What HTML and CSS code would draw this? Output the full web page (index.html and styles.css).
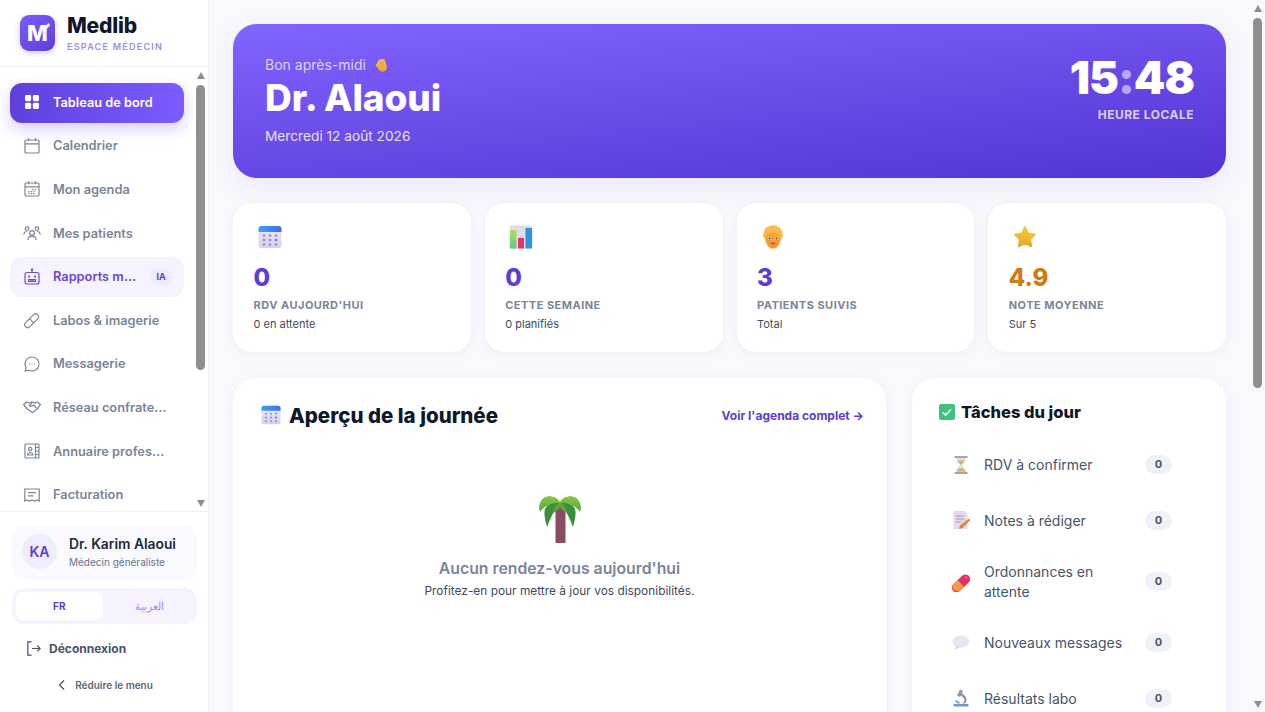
FILE: index.html
```html
<!DOCTYPE html>
<html lang="fr">
<head>
  <meta charset="UTF-8">
  <meta name="viewport" content="width=device-width, initial-scale=1.0">
  <title>Medlib - Tableau de bord</title>
  <link rel="stylesheet" href="styles.css">
</head>
<body>
  <svg class="defs" width="0" height="0" aria-hidden="true">
    <defs>
      <linearGradient id="cal-top" x1="0" y1="0" x2="1" y2="0"><stop offset="0" stop-color="#3aa0f5"/><stop offset="1" stop-color="#3a6ff0"/></linearGradient>
      <linearGradient id="cal-body" x1="0" y1="0" x2="0" y2="1"><stop offset="0" stop-color="#efeaf7"/><stop offset="1" stop-color="#d9cdf0"/></linearGradient>
      <linearGradient id="face" x1="0" y1="0" x2="0" y2="1"><stop offset="0" stop-color="#f9a83a"/><stop offset="1" stop-color="#f08a38"/></linearGradient>
      <linearGradient id="leaf" x1="0" y1="0" x2="0" y2="1"><stop offset="0" stop-color="#84c944"/><stop offset="1" stop-color="#55a83c"/></linearGradient>
      <linearGradient id="star" x1="0" y1="0" x2="0" y2="1"><stop offset="0" stop-color="#f6cb33"/><stop offset="1" stop-color="#e6a92c"/></linearGradient>
      <linearGradient id="bar-green" x1="0" y1="0" x2="0" y2="1"><stop offset="0" stop-color="#b4dc5c"/><stop offset="1" stop-color="#5cc98f"/></linearGradient>
      <linearGradient id="clap" x1="0" y1="0" x2="0" y2="1"><stop offset="0" stop-color="#f9c74f"/><stop offset="1" stop-color="#ee9d34"/></linearGradient>
      <symbol id="emoji-cal" viewBox="0 0 24 24">
        <rect x="0.5" y="1" width="23" height="22" rx="3" fill="url(#cal-body)"/>
        <path d="M0.5 7V4a3 3 0 0 1 3-3h17a3 3 0 0 1 3 3v3z" fill="url(#cal-top)"/>
        <g fill="#9a8cc8">
          <circle cx="6" cy="10.5" r="1.3"/><circle cx="12" cy="10.5" r="1.3"/><circle cx="18" cy="10.5" r="1.3"/>
          <circle cx="6" cy="15" r="1.3"/><circle cx="12" cy="15" r="1.3"/><circle cx="18" cy="15" r="1.3" fill="#4f7fd8"/>
          <circle cx="6" cy="19.5" r="1.3"/><circle cx="12" cy="19.5" r="1.3"/><circle cx="18" cy="19.5" r="1.3"/>
        </g>
      </symbol>
    </defs>
  </svg>

  <aside class="sidebar">
    <div class="sidebar-head">
      <div class="logo-icon">M<span class="logo-spark"></span></div>
      <div>
        <div class="logo-name">Medlib</div>
        <div class="logo-sub">ESPACE MÉDECIN</div>
      </div>
    </div>

    <div class="nav-wrap">
      <nav class="nav">
        <a class="nav-item active">
          <svg class="nav-icon" viewBox="0 0 18 18"><rect x="2" y="2" width="6.2" height="6.2" rx="1.4"/><rect x="9.8" y="2" width="6.2" height="6.2" rx="1.4"/><rect x="2" y="9.8" width="6.2" height="6.2" rx="1.4"/><rect x="9.8" y="9.8" width="6.2" height="6.2" rx="1.4"/></svg>
          <span class="nav-text">Tableau de bord</span>
        </a>
        <a class="nav-item">
          <svg class="nav-icon" viewBox="0 0 18 18"><rect x="2" y="3" width="14" height="13" rx="1"/><path d="M2 6.8h14M5.500 1.200v3M12.500 1.200v3"/></svg>
          <span class="nav-text">Calendrier</span>
        </a>
        <a class="nav-item">
          <svg class="nav-icon" viewBox="0 0 18 18"><rect x="2" y="3" width="14" height="13" rx="1"/><path d="M2 6.800h14M5.500 1.200v3M12.500 1.200v3"/><path d="M9 9.600h3.800M5.200 11.600h7.600M5.200 13.600h7.600" stroke-dasharray="1.300 1.200"/></svg>
          <span class="nav-text">Mon agenda</span>
        </a>
        <a class="nav-item">
          <svg class="nav-icon" viewBox="0 0 18 18"><circle cx="9" cy="9" r="2.300"/><path d="M4.800 16c.3-2.500 2-3.800 4.200-3.800s3.900 1.300 4.200 3.800"/><circle cx="4" cy="4.600" r="1.800"/><circle cx="14" cy="4.600" r="1.800"/><path d="M.8 10.500c.2-2 1.300-3 2.900-3M17.200 10.500c-.2-2-1.300-3-2.900-3"/></svg>
          <span class="nav-text">Mes patients</span>
        </a>
        <a class="nav-item soft">
          <svg class="nav-icon" viewBox="0 0 18 18"><rect x="2" y="4.500" width="14" height="11.500" rx="2"/><path d="M9 4.500V1.800"/><circle cx="9" cy="1.600" r=".6"/><circle cx="6" cy="8.600" r=".5"/><circle cx="12" cy="8.600" r=".5"/><path d="M5.500 11.500h7v1.800h-7zM8 11.500v1.800M10 11.500v1.800"/></svg>
          <span class="nav-text">Rapports médicaux</span>
          <span class="nav-badge">IA</span>
        </a>
        <a class="nav-item">
          <svg class="nav-icon" viewBox="0 0 18 18"><path d="M2.600 11.700l8-8a2.900 2.900 0 0 1 4.100 4.100l-8 8a2.900 2.900 0 0 1-4.100-4.100zM6.600 7.700l4.100 4.100"/></svg>
          <span class="nav-text">Labos &amp; imagerie</span>
        </a>
        <a class="nav-item">
          <svg class="nav-icon" viewBox="0 0 18 18"><path d="M9 2a7 7 0 1 1-3 13.300L2.200 16l.8-3.500A7 7 0 0 1 9 2z"/><path d="M5.800 9h6.400" stroke-dasharray="1 1.700"/></svg>
          <span class="nav-text">Messagerie</span>
        </a>
        <a class="nav-item">
          <svg class="nav-icon" viewBox="0 0 18 18"><path d="M.6 6.500L3.500 4l2.700 1 2.800-1 2.800 1 2.700-1 2.900 2.500-2.800 4.200-4.300 3.300a1.200 1.200 0 0 1-1.600 0L4 10.700z"/><path d="M9 5.200L6.300 7.600c.8 1 2 1 3 .2l1.200-.8 3.500 3.600"/></svg>
          <span class="nav-text">Réseau confraternel</span>
        </a>
        <a class="nav-item">
          <svg class="nav-icon" viewBox="0 0 18 18"><rect x="2" y="2" width="14" height="14" rx="1"/><path d="M12.500 2v14M12.500 5.500H16M12.500 9H16M12.500 12.500H16"/><circle cx="7.200" cy="7" r="1.700"/><path d="M4.500 13c.2-1.700 1.200-2.500 2.700-2.500s2.500.8 2.700 2.500z"/></svg>
          <span class="nav-text">Annuaire professionnel</span>
        </a>
        <a class="nav-item">
          <svg class="nav-icon" viewBox="0 0 18 18"><path d="M1.800 3h14.400v12l-2-1-2.600 1-2.600-1-2.600 1-2.600-1-2 1z"/><path d="M5 6.700h8M5 9.800h5.500"/></svg>
          <span class="nav-text">Facturation</span>
        </a>
      </nav>
      <div class="scrollbar scrollbar-nav">
        <span class="arrow-up"></span>
        <span class="thumb"></span>
        <span class="arrow-down"></span>
      </div>
    </div>

    <div class="sidebar-foot">
      <div class="user-card">
        <div class="avatar">KA</div>
        <div>
          <div class="user-name">Dr. Karim Alaoui</div>
          <div class="user-role">Médecin généraliste</div>
        </div>
      </div>
      <div class="lang-switch">
        <span class="lang-btn selected">FR</span>
        <span class="lang-btn" lang="ar" dir="rtl">العربية</span>
      </div>
      <a class="logout">
        <svg viewBox="0 0 18 18" width="17" height="17"><path d="M7 2H3v14h4M7.500 9h8.500M13 6l3 3-3 3"/></svg>
        Déconnexion
      </a>
      <a class="collapse">
        <svg viewBox="0 0 12 12" width="12" height="12"><path d="M8 1.500L3.500 6 8 10.500"/></svg>
        Réduire le menu
      </a>
    </div>
  </aside>

  <main class="content">
    <section class="hero">
      <div>
        <p class="hero-hello">Bon après-midi
          <svg class="hero-clap" viewBox="0 0 14 14" width="14" height="14"><path d="M3 5l2-3.500 1.300.6L7.500.8l1.400.6 1.500-.2 1.400 3.600 1 3.700c.5 2.500-1 4.700-3.300 5.100-2 .3-3.600-.4-4.700-2L1.800 7.500c-.5-.9.600-1.600 1.200-.9z" fill="url(#clap)"/><path d="M5.500 3.500l2.800 4.200M7.800 2.500l2.200 4.300" stroke="#d98c22" stroke-width=".8" fill="none"/></svg>
        </p>
        <h1 class="hero-name">Dr. Alaoui</h1>
        <p class="hero-date">Mercredi 12 août 2026</p>
      </div>
      <div class="hero-clock">
        <div class="hero-time">15<span class="hero-colon">:</span>48</div>
        <div class="hero-label">HEURE LOCALE</div>
      </div>
    </section>

    <section class="stats">
      <div class="stat-card">
        <svg class="stat-icon" viewBox="0 0 24 24"><use href="#emoji-cal"/></svg>
        <div class="stat-value">0</div>
        <div class="stat-label">RDV AUJOURD'HUI</div>
        <div class="stat-sub">0 en attente</div>
      </div>
      <div class="stat-card">
        <svg class="stat-icon" viewBox="0 0 24 24">
          <rect x="0.500" y="0.500" width="23" height="23" rx="1.500" fill="#dfdde6"/>
          <rect x="1" y="5" width="6.500" height="18.500" fill="url(#bar-green)"/>
          <rect x="9" y="13" width="6" height="10.500" fill="#e8326b"/>
          <rect x="16.500" y="3" width="6.500" height="20.500" fill="#2e93dc"/>
        </svg>
        <div class="stat-value">0</div>
        <div class="stat-label">CETTE SEMAINE</div>
        <div class="stat-sub">0 planifiés</div>
      </div>
      <div class="stat-card">
        <svg class="stat-icon" viewBox="0 0 24 24">
          <path d="M12 .3c2 0 3.500.5 5 1.500 2.500.8 4 3 4.200 5.700.9 1.500.9 3 .3 4.500-.4 1-.9 1.800-1.500 2.500C19 20.500 15.800 23.800 12 23.800S5 20.500 4 14.500c-.6-.7-1.100-1.500-1.500-2.500-.6-1.500-.6-3 .3-4.500C3 4.800 4.500 2.600 7 1.800 8.500.8 10 .3 12 .3z" fill="#f9bb4c"/>
          <path d="M4.800 11.500c1.500-2.500 3.500-4 7.200-4s5.700 1.500 7.200 4c.3 6-3 11.500-7.200 11.500S4.500 17.500 4.800 11.500z" fill="url(#face)"/>
          <circle cx="8.600" cy="13.500" r="1.500" fill="#fff"/><circle cx="15.400" cy="13.500" r="1.500" fill="#fff"/>
          <circle cx="8.600" cy="13.500" r="1" fill="#4a2e1c"/><circle cx="15.400" cy="13.500" r="1" fill="#4a2e1c"/>
          <path d="M9.800 18c1.400 1 3 1 4.400 0-1.400.3-3 .3-4.400 0z" fill="#c8402f" stroke="#c8402f" stroke-width=".8"/>
        </svg>
        <div class="stat-value">3</div>
        <div class="stat-label">PATIENTS SUIVIS</div>
        <div class="stat-sub">Total</div>
      </div>
      <div class="stat-card">
        <svg class="stat-icon" viewBox="0 0 24 24"><path d="M12 2.500l2.900 6.400 6.600.8-4.900 4.600 1.300 6.700-5.900-3.300-5.900 3.300 1.300-6.700-4.900-4.600 6.600-.8z" fill="url(#star)" stroke="url(#star)" stroke-width="2.500" stroke-linejoin="round"/></svg>
        <div class="stat-value gold">4.9</div>
        <div class="stat-label">NOTE MOYENNE</div>
        <div class="stat-sub">Sur 5</div>
      </div>
    </section>

    <section class="panels">
      <div class="panel panel-day">
        <div class="panel-head">
          <h2 class="panel-title">
            <svg class="title-icon" viewBox="0 0 24 24"><use href="#emoji-cal"/></svg>
            Aperçu de la journée
          </h2>
          <a class="panel-link">Voir l'agenda complet →</a>
        </div>
        <div class="empty">
          <svg class="empty-icon" viewBox="0 0 42 48" width="42" height="48">
            <rect x="16.500" y="12" width="10" height="36" fill="#8a4c60"/>
            <path d="M21 8C17 5 9 9 6.500 13c-2 3.500-1 11 1.500 19 3-8 7-17 13-24z" fill="#3f8f3a"/>
            <path d="M21 8c4-3 12 1 14.500 5 2 3.500 1 11-1.500 19-3-8-7-17-13-24z" fill="#3f8f3a"/>
            <path d="M21 7c-3 1-7 6-6.500 11 2.500-1.500 4.500-3 6.500-5.500 2 2.500 4 4 6.500 5.500.5-5-3.500-10-6.500-11z" fill="#58a53c"/>
            <path d="M21 7C18 1 6-2 1.500 7-.5 11 0 14 1 17c4-6 10-8 20-10z" fill="url(#leaf)"/>
            <path d="M21 7c3-6 15-9 19.500 0 2 4 1.500 7 .5 10-4-6-10-8-20-10z" fill="url(#leaf)"/>
          </svg>
          <div class="empty-title">Aucun rendez-vous aujourd'hui</div>
          <div class="empty-sub">Profitez-en pour mettre à jour vos disponibilités.</div>
        </div>
      </div>

      <div class="panel panel-tasks">
        <h3 class="tasks-title">
          <svg class="check-icon" viewBox="0 0 16 16"><rect width="16" height="16" rx="2" fill="#3cc47c"/><path d="M3.800 8.300l2.800 2.700 5.600-5.600" fill="none" stroke="#e9f9f0" stroke-width="1.700"/></svg>
          Tâches du jour
        </h3>
        <ul class="task-list">
          <li class="task">
            <svg class="task-icon" viewBox="0 0 20 20"><rect x="3.500" y="1" width="13" height="2" fill="#a9a7a0"/><rect x="3.500" y="17" width="13" height="2" fill="#a9a7a0"/><path d="M5 3h10c0 4-3 5.500-4 7 1 1.500 4 3 4 7H5c0-4 3-5.500 4-7-1-1.500-4-3-4-7z" fill="#d8e4e8"/><path d="M6.500 5.500h7C13 7.500 11 8.500 10 10 9 8.500 7 7.500 6.500 5.500zM5.700 16.500c.5-2 2.500-3 4.300-3.500 1.800.5 3.800 1.500 4.300 3.500z" fill="#d9b45c"/></svg>
            <span class="task-text">RDV à confirmer</span>
            <span class="task-count">0</span>
          </li>
          <li class="task">
            <svg class="task-icon" viewBox="0 0 20 20"><path d="M2.500 1h11l3 3v15h-14z" fill="#e4d8ec"/><path d="M5 6h8M5 9h8M5 12h5" stroke="#a89ac0" stroke-width="1"/><path d="M18 8.500l1.500 1.500-8 8-3.500 1 1-3.500z" fill="#f0803c"/></svg>
            <span class="task-text">Notes à rédiger</span>
            <span class="task-count">0</span>
          </li>
          <li class="task">
            <svg class="task-icon" viewBox="0 0 20 20"><path d="M2.200 12.200l9-8.500a4.700 4.700 0 0 1 6.500 6.800l-9 8.500a4.700 4.700 0 0 1-6.500-6.800z" fill="#e8305f"/><path d="M6.800 8.200l5.800 6-4 4.300a4.600 4.600 0 0 1-6.400-6.300z" fill="#f99a3d"/><circle cx="15" cy="5.500" r="1.200" fill="#f77a9a"/></svg>
            <span class="task-text">Ordonnances en attente</span>
            <span class="task-count">0</span>
          </li>
          <li class="task">
            <svg class="task-icon" viewBox="0 0 20 20"><ellipse cx="10" cy="8.500" rx="8.500" ry="6" fill="#e8e4f0"/><path d="M5 12.500L4 17l5-3z" fill="#dbd5e8"/></svg>
            <span class="task-text">Nouveaux messages</span>
            <span class="task-count">0</span>
          </li>
          <li class="task">
            <svg class="task-icon" viewBox="0 0 20 20"><path d="M9 1.500l3 1.500-1 2 3.500 3.500c1.500 2 1.500 5-.5 7h-2.500c2-1.500 2.500-4 1-5.500L10 7.500l-1 1.500-3-1.500z" fill="#8e93a6"/><path d="M5 12l4 2.500-1 1.500-4-2.500z" fill="#6f9fd8"/><rect x="2.500" y="16" width="15" height="2.500" rx=".8" fill="#7d93c4"/></svg>
            <span class="task-text">Résultats labo</span>
            <span class="task-count">0</span>
          </li>
        </ul>
      </div>
    </section>
  </main>

  <div class="scrollbar scrollbar-page">
    <span class="arrow-up"></span>
    <span class="thumb"></span>
    <span class="arrow-down"></span>
  </div>
</body>
</html>
```

FILE: styles.css
```css
:root {
  --primary: #5b3cd6;
  --primary-soft: #f6f3ff;
  --ink: #0f172a;
  --text: #334155;
  --muted: #64748b;
  --grey: #7a8599;
  --line: #eef0f6;
  --bg: #f8f8fd;
  --bar: #8f8f8f;
  --shadow: 0 2px 12px rgba(80, 60, 180, 0.05);
}

* {
  box-sizing: border-box;
  margin: 0;
  padding: 0;
}

html, body {
  height: 100%;
}

body {
  font-family: 'Inter', 'Liberation Sans', sans-serif;
  color: var(--text);
  background-color: var(--bg);
  display: flex;
  overflow: hidden;
}

.defs {
  position: absolute;
}

/* scrollbars */
.scrollbar {
  width: 15px;
  flex-shrink: 0;
  display: flex;
  flex-direction: column;
  align-items: center;
}

.scrollbar .thumb {
  width: 9px;
  border-radius: 5px;
  background-color: var(--bar);
}

.arrow-up,
.arrow-down {
  width: 0;
  height: 0;
  border-left: 4.5px solid transparent;
  border-right: 4.5px solid transparent;
}

.arrow-up {
  border-bottom: 7px solid var(--bar);
}

.arrow-down {
  border-top: 7px solid var(--bar);
}

.scrollbar-nav .arrow-up {
  margin-top: 5px;
}

.scrollbar-nav .thumb {
  height: 285px;
  margin-top: 6px;
}

.scrollbar-nav .arrow-down {
  margin-top: 130px;
}

.scrollbar-page .arrow-up {
  margin-top: 5px;
}

.scrollbar-page .thumb {
  height: 370px;
  margin-top: 6px;
}

.scrollbar-page .arrow-down {
  margin-top: 313px;
}

/* sidebar */
.sidebar {
  width: 209px;
  flex-shrink: 0;
  height: 100%;
  background-color: #fff;
  border-right: 1px solid var(--line);
  display: flex;
  flex-direction: column;
}

.sidebar-head {
  height: 67px;
  flex-shrink: 0;
  display: flex;
  align-items: center;
  gap: 12px;
  padding: 0 20px 1px 20px;
  border-bottom: 1px solid var(--line);
}

.logo-icon {
  position: relative;
  width: 35px;
  height: 36px;
  border-radius: 9px;
  background: linear-gradient(145deg, #7c5cf8, #5f3fdc);
  display: flex;
  align-items: center;
  justify-content: center;
  color: #fff;
  font-size: 22px;
  font-weight: 800;
  box-shadow: 0 2px 6px rgba(91, 60, 214, 0.25);
}

.logo-spark {
  position: absolute;
  top: 8px;
  right: 6px;
  width: 3px;
  height: 6px;
  border-radius: 2px;
  transform: rotate(40deg);
  background-color: #f1ecff;
}

.logo-name {
  font-size: 21px;
  font-weight: 800;
  line-height: 24px;
  color: var(--ink);
  letter-spacing: -0.2px;
}

.logo-sub {
  margin-top: 3px;
  font-size: 9px;
  font-weight: 600;
  line-height: 11px;
  letter-spacing: 1.25px;
  color: #a08bf0;
}

.nav-wrap {
  flex: 1;
  min-height: 0;
  display: flex;
}

.nav {
  flex: 1;
  min-width: 0;
  overflow: hidden;
  display: flex;
  flex-direction: column;
  gap: 4px;
  padding: 16px 9px 0 10px;
}

.nav-item {
  display: flex;
  align-items: center;
  gap: 12px;
  height: 39.6px;
  flex-shrink: 0;
  padding: 0 14px 1px 13px;
  border-radius: 12px;
  color: var(--grey);
  font-size: 12.8px;
  font-weight: 600;
}

.nav-icon {
  width: 18px;
  height: 18px;
  flex-shrink: 0;
  fill: none;
  stroke: currentColor;
  stroke-width: 1.2;
}

.nav-text {
  white-space: nowrap;
  overflow: hidden;
  text-overflow: ellipsis;
  flex: 1;
  min-width: 0;
}

.nav-item.active {
  color: #fff;
  background: linear-gradient(90deg, #5f3fdc, #7c5cff);
  box-shadow: 0 6px 16px rgba(108, 76, 240, 0.28);
}

.nav-item.active .nav-icon {
  fill: currentColor;
  stroke: none;
}

.nav-item.soft {
  color: #6a48d8;
  background-color: var(--primary-soft);
}

.nav-badge {
  width: 22px;
  height: 16px;
  margin-right: -2px;
  border-radius: 8px;
  background-color: #efeafd;
  color: #5b3cd6;
  font-size: 9px;
  font-weight: 700;
  line-height: 16px;
  text-align: center;
  flex-shrink: 0;
}

.sidebar-foot {
  flex-shrink: 0;
  height: 201px;
  padding: 13px 11px 0 12px;
  border-top: 1px solid var(--line);
}

.user-card {
  height: 55px;
  display: flex;
  align-items: center;
  gap: 12px;
  padding: 0 10px 2px 10px;
  border-radius: 14px;
  background-color: #faf9fe;
}

.avatar {
  width: 35px;
  height: 35px;
  border-radius: 50%;
  background-color: #f0ebfd;
  color: #5b3cd6;
  display: flex;
  align-items: center;
  justify-content: center;
  font-size: 14px;
  font-weight: 600;
}

.user-name {
  font-size: 13.8px;
  font-weight: 600;
  line-height: 18px;
  color: #1e293b;
}

.user-role {
  margin-top: 3px;
  font-size: 10px;
  line-height: 13px;
  color: var(--muted);
}

.lang-switch {
  display: flex;
  gap: 4px;
  height: 36px;
  margin-top: 8px;
  padding: 4px;
  border-radius: 12px;
  background-color: var(--primary-soft);
}

.lang-btn {
  flex: 1;
  display: flex;
  align-items: center;
  justify-content: center;
  border-radius: 8px;
  font-size: 11px;
  font-weight: 500;
  color: #a08bf0;
}

.lang-btn.selected {
  background-color: #fff;
  color: #5b3cd6;
  font-size: 10px;
  font-weight: 700;
}

.logout {
  display: flex;
  align-items: center;
  gap: 7px;
  margin-top: 15px;
  padding-left: 13px;
  height: 18px;
  font-size: 12px;
  font-weight: 700;
  color: #475569;
}

.logout svg,
.collapse svg {
  fill: none;
  stroke: #475569;
  stroke-width: 1.3;
}

.collapse {
  display: flex;
  align-items: center;
  justify-content: center;
  gap: 7px;
  margin-top: 20px;
  height: 16px;
  font-size: 10px;
  font-weight: 600;
  color: #5b6679;
}

/* main */
.content {
  flex: 1;
  min-width: 0;
  height: 100%;
  overflow: hidden;
  padding: 24px;
}

.hero {
  height: 154px;
  padding: 32px 32px 0 32px;
  border-radius: 24px;
  background: linear-gradient(174deg, #8264ff, #5333d2);
  box-shadow: 0 8px 28px rgba(91, 60, 214, 0.08);
  color: #fff;
  display: flex;
  justify-content: space-between;
  align-items: flex-start;
}

.hero-hello {
  display: flex;
  align-items: center;
  gap: 8px;
  font-size: 14px;
  line-height: 18px;
  color: #dcd3ff;
}

.hero-name {
  margin-top: 2px;
  font-size: 37px;
  font-weight: 800;
  line-height: 44px;
  letter-spacing: -0.1px;
}

.hero-date {
  margin-top: 7px;
  font-size: 13.7px;
  line-height: 18px;
  color: #e6e0ff;
}

.hero-clock {
  text-align: right;
  margin-top: -5px;
}

.hero-time {
  font-size: 45px;
  font-weight: 900;
  line-height: 54px;
  letter-spacing: -1px;
}

.hero-colon {
  color: #b9a6f5;
}

.hero-label {
  margin-top: 2px;
  font-size: 12px;
  font-weight: 700;
  line-height: 16px;
  letter-spacing: 0.5px;
  color: #d9cffc;
}

.stats {
  display: grid;
  grid-template-columns: repeat(4, 1fr);
  gap: 14px;
  margin-top: 25px;
}

.stat-card {
  height: 149px;
  padding: 22px 20px 0 20.5px;
  border-radius: 20px;
  background-color: #fff;
  box-shadow: var(--shadow);
}

.stat-icon {
  display: block;
  width: 24px;
  height: 24px;
  margin-left: 4px;
}

.stat-value {
  margin-top: 13px;
  font-size: 24px;
  font-weight: 800;
  line-height: 32px;
  color: var(--primary);
}

.stat-value.gold {
  color: #d07a12;
}

.stat-label {
  margin-top: 3px;
  font-size: 11px;
  font-weight: 700;
  line-height: 16px;
  letter-spacing: 0.48px;
  color: var(--grey);
}

.stat-sub {
  margin-top: 3px;
  font-size: 11px;
  line-height: 16px;
  color: #3f4a5c;
}

.panels {
  display: grid;
  grid-template-columns: 1fr 314px;
  gap: 26px;
  margin-top: 26px;
}

.panel {
  min-height: 660px;
  border-radius: 24px;
  background-color: #fff;
  box-shadow: var(--shadow);
}

.panel-day {
  padding: 22px;
}

.panel-head {
  display: flex;
  align-items: center;
  justify-content: space-between;
  height: 30px;
  padding-left: 6px;
}

.panel-title {
  display: flex;
  align-items: center;
  gap: 8px;
  font-size: 20.5px;
  font-weight: 800;
  color: var(--ink);
}

.title-icon {
  width: 20px;
  height: 22px;
}

.panel-link {
  font-size: 12px;
  font-weight: 700;
  color: #5b3cd6;
}

.empty {
  display: flex;
  flex-direction: column;
  align-items: center;
  padding-top: 65px;
}

.empty-title {
  margin-top: 15px;
  font-size: 15.8px;
  font-weight: 600;
  line-height: 22px;
  color: var(--grey);
}

.empty-sub {
  margin-top: 2px;
  font-size: 11.9px;
  line-height: 18px;
  color: #3f4a5c;
}

.panel-tasks {
  padding: 23px 26px 24px 27px;
}

.tasks-title {
  display: flex;
  align-items: center;
  gap: 6px;
  font-size: 16.5px;
  font-weight: 800;
  line-height: 22px;
  color: var(--ink);
}

.check-icon {
  width: 16px;
  height: 16px;
}

.task-list {
  list-style: none;
  margin-top: 14px;
}

.task {
  display: flex;
  align-items: center;
  gap: 13px;
  padding: 14px 28px 14px 12px;
  min-height: 55.5px;
}

.task-icon {
  width: 20px;
  height: 20px;
  flex-shrink: 0;
}

.task-text {
  flex: 1;
  font-size: 14px;
  line-height: 19.5px;
  color: #475569;
}

.task-count {
  width: 27px;
  height: 19px;
  border-radius: 10px;
  background-color: #eff3f9;
  color: #475569;
  font-size: 11px;
  font-weight: 700;
  line-height: 19px;
  text-align: center;
  flex-shrink: 0;
}
```
